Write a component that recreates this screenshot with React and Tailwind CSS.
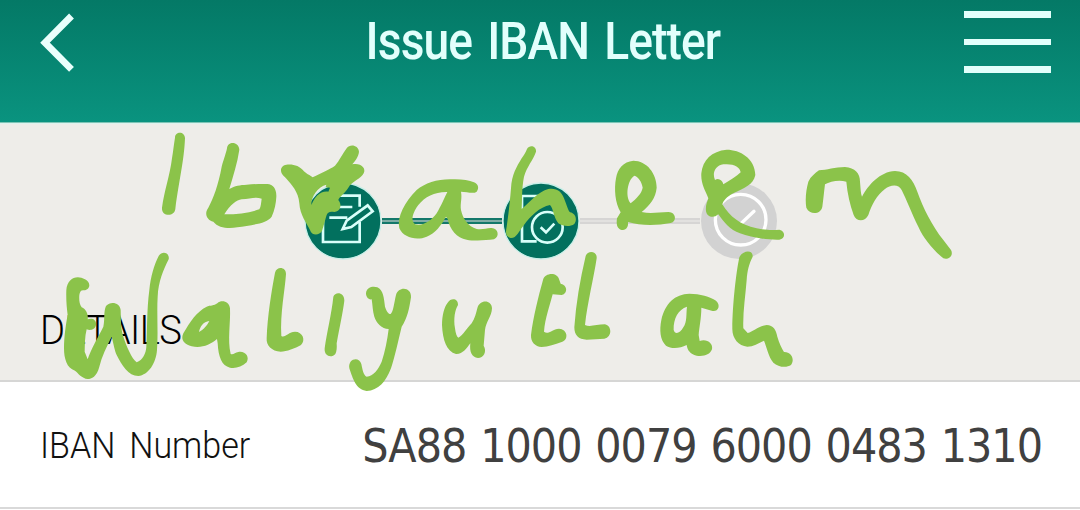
const INK = [
  {
    at: "translate(150 125) scale(.33333)",
    paths: [
      "M75 38C75 18 105 18 105 40C102 110 88 160 76 252C74 276 34 276 36 248C42 200 60 150 66 100C70 75 72 55 75 38Z",
      "M231 70C233 48 266 48 268 74C262 115 250 150 238 192C255 182 270 180 290 179C310 178 330 176 352 177C370 178 380 192 379 215C378 235 374 255 365 275C350 297 300 300 262 307C235 312 205 309 190 290C170 285 162 265 175 248C190 220 205 180 215 125C222 100 228 85 231 70ZM223 268C265 268 300 263 328 253C333 245 333 235 335 221C315 215 300 222 275 223C260 225 240 240 223 268Z",
      "M393 133C396 115 425 116 442 123C460 133 465 145 478 150L488 157C510 145 540 133 555 122C570 105 575 90 590 70C600 55 625 60 627 80C626 95 615 108 607 118C630 112 650 128 641 145C635 160 605 170 595 188C585 205 568 215 565 225C578 240 570 260 553 261C540 258 532 262 530 270C524 290 522 300 516 318C508 332 485 333 480 315C470 295 450 270 448 235C445 200 425 180 408 160C398 150 392 145 393 133ZM484 240C495 215 510 197 535 200L540 188L527 187L529 179C505 185 482 215 484 240Z",
    ],
  },
  {
    at: "translate(370 125) scale(.33333)",
    paths: [
      "M312 172C325 177 328 190 320 200C310 208 290 200 273 200C277 220 270 235 273 255C278 280 295 305 320 312C340 315 350 308 365 309C385 310 390 335 372 343C345 347 310 348 290 344C260 338 240 315 233 282L228 275C215 300 195 325 170 335C140 348 100 338 88 310C80 275 105 230 140 195C165 175 200 163 240 163C270 161 295 165 312 172ZM232 201C195 200 165 215 145 240C130 260 120 285 135 298C160 305 185 285 200 265C212 245 225 215 232 201Z",
      "M471 72C478 58 500 62 498 80C490 105 470 125 462 155C455 190 457 220 455 252C480 230 505 200 535 192C560 188 575 200 582 220C590 240 595 258 600 262C618 265 622 285 613 297C600 306 580 305 565 295C550 275 550 250 540 240C510 245 480 275 462 300C445 320 440 340 422 339C405 335 407 320 410 305C415 270 420 230 423 190C425 150 440 125 455 100C462 90 467 82 471 72Z",
    ],
  },
  {
    at: "translate(590 125) scale(.33333)",
    paths: [
      "M130 107C170 107 200 145 200 188C197 220 180 240 155 261C180 267 205 262 235 261C258 260 262 290 242 294C200 302 150 302 114 291C116 310 105 315 95 315C82 312 78 300 81 280L92 262C75 235 72 190 78 160C83 130 100 110 130 107ZM133 152C112 165 105 215 122 235C140 220 155 205 158 188C155 170 145 155 133 152Z",
      "M410 74C450 74 495 100 496 150C490 180 460 190 430 205C410 215 400 228 397 238C420 275 450 300 500 310C530 316 550 315 568 314C588 318 586 343 568 344C520 345 480 335 450 325C420 315 400 290 385 268C370 282 350 275 348 258C346 240 352 230 355 220C345 195 332 175 334 145C338 105 365 78 410 74ZM375 165C366 145 375 122 400 118C430 115 450 125 452 142C440 155 420 165 400 178C397 165 385 158 375 165Z",
      "M687 136C710 135 735 126 765 126C795 128 810 145 810 170C812 190 812 205 816 215C835 180 870 140 915 138C950 138 970 165 982 200C1000 250 1025 300 1060 345L1083 375C1092 392 1075 406 1060 400C1030 375 1000 340 985 305C965 265 950 225 935 195C925 175 900 180 885 192C860 210 845 240 835 270C825 292 798 290 791 270C780 240 772 205 769 170C745 164 720 170 705 178C702 200 700 225 697 245C693 268 660 272 649 248C645 225 648 195 655 170C662 155 675 145 687 136Z",
    ],
  },
  {
    at: "translate(20 240) scale(.33333)",
    paths: [
      "M195 118C215 128 210 150 192 151C182 150 180 155 178 165C177 180 178 192 185 202C200 208 205 225 203 238C218 232 230 240 228 255C225 270 210 272 200 268C194 290 195 315 194 335L203 358C212 330 235 290 250 260C255 240 250 215 258 198C272 182 300 188 302 210C303 240 302 265 310 290C320 320 335 355 350 367C368 360 378 340 379 320C382 270 380 210 388 150C392 110 402 75 416 48C428 30 450 40 446 58C430 90 415 125 413 170C410 220 415 280 411 330C408 370 385 405 355 408C325 408 305 375 290 345C285 335 280 310 275 290C260 320 245 350 238 380C230 410 215 417 203 417C185 415 175 400 165 392C140 385 132 355 132 325C132 290 138 250 143 225C140 200 138 180 139 150C142 115 170 103 195 118Z",
      "M592 190C605 178 628 185 630 205C632 250 622 300 632 342C640 345 645 338 655 336C675 332 690 350 680 367C665 382 645 386 630 383C605 378 595 350 593 310L591 297C570 315 545 325 515 319C495 315 480 300 490 280C510 245 530 215 560 200C570 196 582 198 592 190ZM568 243C550 245 540 260 537 276C550 270 562 255 568 243Z",
      "M765 98C770 78 798 80 798 102C795 150 780 220 784 288C795 295 805 275 825 275C848 275 858 300 843 315C825 325 800 335 782 335C755 335 738 315 740 295C742 230 755 150 765 98Z",
    ],
  },
  {
    at: "translate(320 240) scale(.33333)",
    paths: [
      "M40 170C45 155 73 155 73 182C68 220 60 255 50 310C51 325 50 335 46 342C35 355 12 350 14 325C20 280 35 220 40 170Z",
      "M138 160C140 140 160 138 172 142C190 150 192 175 195 200C200 215 205 222 212 222C220 215 222 190 228 165C235 138 275 140 273 172C268 205 262 235 245 260C235 300 225 350 213 385C198 425 175 452 140 453C108 450 98 415 88 385C83 355 118 348 124 372C128 390 130 405 140 410C160 408 175 388 185 365C195 335 202 300 206 267C185 266 170 250 163 230C158 215 158 195 155 178C145 180 138 170 138 160Z",
      "M383 188C393 172 415 175 414 195C405 210 400 235 405 265C407 280 410 290 415 293C430 285 440 265 455 250C465 235 468 220 472 205C478 178 515 178 516 205C515 230 498 245 495 270L491 317C502 335 490 354 474 354C455 352 448 335 451 310C440 325 428 343 408 342C380 335 368 300 366 255C366 225 373 200 383 188Z",
      "M669 120C675 98 712 95 718 120L722 131C742 135 745 160 725 165L698 163C690 195 675 235 672 275C685 285 695 268 717 266C742 267 748 298 725 306C705 312 685 321 665 321C645 320 632 305 633 285C640 230 655 170 669 120Z",
      "M797 48C803 30 832 32 830 55C822 110 802 190 795 255C810 262 830 253 855 253C877 258 876 292 853 296L800 299C775 299 763 285 763 262C768 190 780 120 797 48Z",
    ],
  },
  {
    at: "translate(600 240) scale(.33333)",
    paths: [
      "M268 161C300 161 330 170 348 182C365 198 352 218 335 212L304 203C304 235 298 260 296 285L299 303C320 295 340 310 336 328C330 345 310 350 290 347C270 342 262 330 260 315C240 325 215 328 198 317C180 300 178 270 184 240C195 190 225 162 268 161ZM261 200C235 208 220 235 221 270C225 285 240 280 250 262C262 245 258 220 261 200Z",
      "M418 52C428 30 460 28 458 50C448 70 442 90 440 120C436 170 428 220 430 265L443 279C460 275 475 258 500 255C520 255 528 270 532 290C538 310 545 325 552 336C575 335 585 360 573 375C560 384 535 382 520 368C505 350 500 320 492 302C475 310 460 320 442 320C415 318 396 295 397 265C398 190 408 100 418 52Z",
    ],
  },
];

function Handwriting() {
  return (
    <svg className="pointer-events-none absolute inset-0" width="1080" height="510" viewBox="0 0 1080 510" fill="#8bc34a" fillRule="evenodd" aria-hidden="true">
      {INK.map((group) => (
        <g key={group.at} transform={group.at}>
          {group.paths.map((d) => (
            <path key={d} d={d} />
          ))}
        </g>
      ))}
    </svg>
  );
}

function Header() {
  return (
    <header className="flex h-[123px] items-start justify-between border-b border-[#7fc4b5] bg-linear-to-b from-[#047966] to-[#0a937f] pr-[29px] pl-[40px]">
      <button className="mt-[13px] w-[87px]" aria-label="Back">
        <svg width="34" height="59" viewBox="0 0 34 59" fill="none" stroke="#e9fffc" strokeWidth="6.8">
          <path d="M31.500 3L5 29.700L31.500 56.400" />
        </svg>
      </button>
      <h1 className="mt-[12px] mr-[5px] scale-x-[0.905] font-[Roboto] text-[51px] leading-[60px] font-medium tracking-[-1px] whitespace-nowrap text-[#e2fffc] [word-spacing:5px]">Issue IBAN Letter</h1>
      <button className="mt-[11px] flex w-[87px] flex-col gap-[21px]" aria-label="Menu">
        <span className="h-[6.500px] bg-[#e2fffb]" />
        <span className="h-[6.500px] bg-[#e2fffb]" />
        <span className="h-[6.500px] bg-[#e2fffb]" />
      </button>
    </header>
  );
}

function Stepper() {
  return (
    <div className="flex items-center justify-center pt-[58px] pl-[2px]">
      <svg className="shrink-0" width="78" height="78" viewBox="462 172 234 234" fill="none" stroke="#d9fffa" strokeWidth="8">
        <circle cx="579" cy="289" r="114" fill="#02705e" stroke="#c8efe8" strokeWidth="4" />
        <path d="M540 213H629V246M629 292V352H519V213H545M545 247H607M538 279H592" />
        <path d="M578 313L590 288L653 242L668 260L604 307Z" strokeWidth="8" />
      </svg>
      <div className="h-[6px] w-[120px] border-y-2 border-[#13786a] bg-[#7fada5]" />
      <svg className="shrink-0" width="78" height="78" viewBox="396 171 234 234" fill="none" stroke="#d9fffa" strokeWidth="8">
        <circle cx="513" cy="288" r="114" fill="#02705e" stroke="#c8efe8" strokeWidth="4" />
        <path d="M500 349H456V213H555V258" />
        <circle cx="532" cy="307" r="46" />
        <path d="M512 307L528 322L553 296" />
      </svg>
      <div className="h-[6px] w-[120px] border-y-2 border-[#d6d5d4] bg-[#e2e1df]" />
      <svg className="shrink-0" width="78" height="78" viewBox="330 171 234 234" fill="none" stroke="#ffffff" strokeWidth="10" strokeLinecap="round">
        <circle cx="447" cy="288" r="114" fill="#d2d2d2" stroke="none" />
        <circle cx="452" cy="284" r="76" />
        <path d="M420 286L440 308L492 259" />
      </svg>
    </div>
  );
}

export default function App() {
  return (
    <main className="relative flex h-[510px] w-[1080px] flex-col overflow-hidden bg-white">
      <Header />
      <section className="h-[259px] border-t border-b-2 border-t-[#def3ee] border-b-[#d6d6d5] bg-[#eeede9]">
        <Stepper />
        <h2 className="mt-[47px] ml-[40px] w-fit origin-left scale-x-[0.955] font-[Roboto] text-[40px] leading-[48px] font-light tracking-[-0.600px] text-black">DETAILS</h2>
      </section>
      <section className="flex h-[127px] items-center justify-between border-b-2 border-[#d9d9d9] pr-[38px] pl-[40px]">
        <span className="origin-left scale-x-[0.92] pt-[2px] font-[Roboto] text-[37px] leading-[48px] font-light whitespace-nowrap text-[#111] [word-spacing:6px]">IBAN Number</span>
        <span className="mt-[2px] font-['DejaVu_Sans_Condensed','DejaVu_Sans'] text-[46px] leading-[56px] tracking-[-1px] whitespace-nowrap text-[#404040] [word-spacing:1.700px]">SA88 1000 0079 6000 0483 1310</span>
      </section>
      <Handwriting />
    </main>
  );
}
